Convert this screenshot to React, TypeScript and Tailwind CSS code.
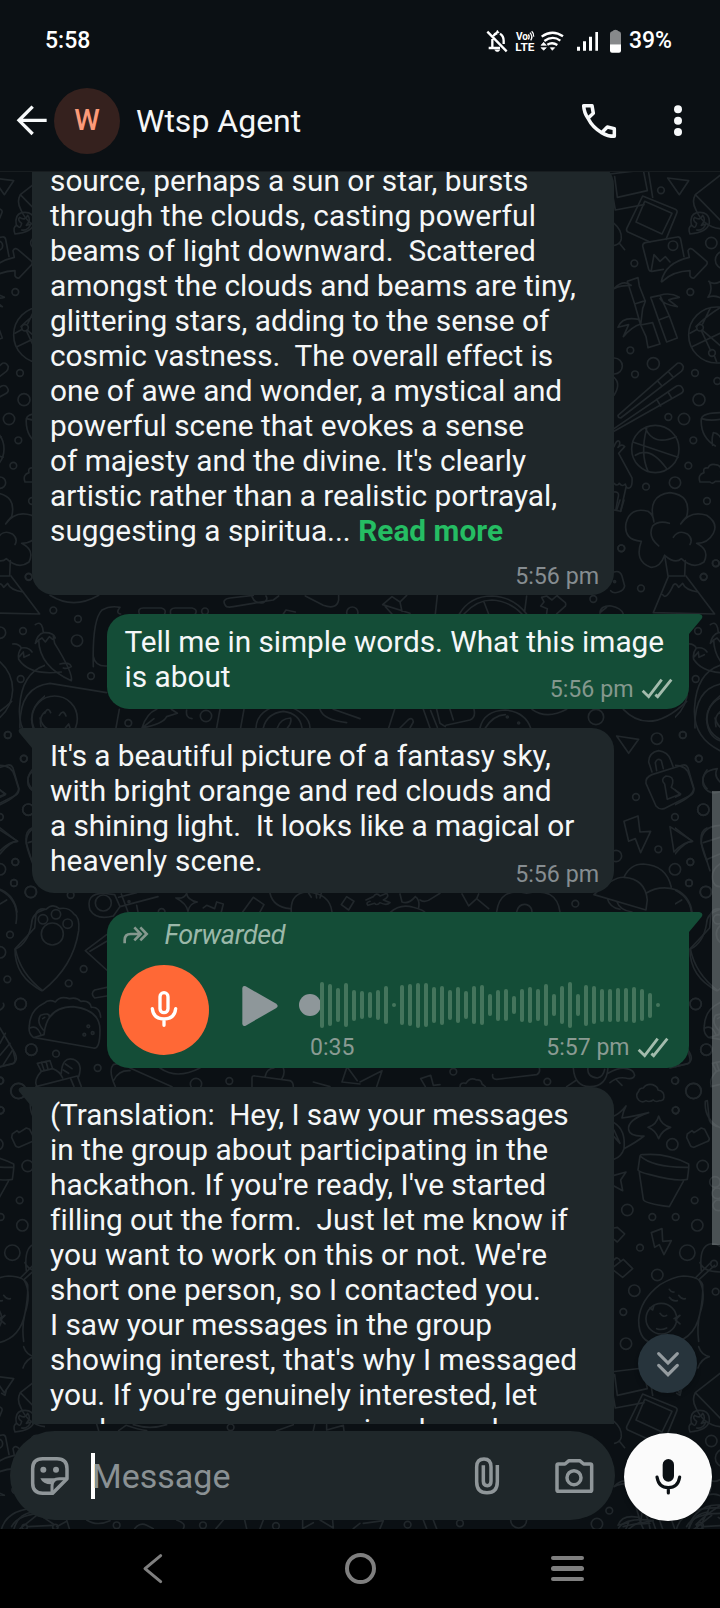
import type { ReactNode } from "react";

/* Line-art wallpaper: one tile is 675 x 1198 px, its motifs drawn on a 3x grid. */
function Tile() {
  return (
    <>
      <g transform="translate(600 160) scale(0.3333)">
        <path d="M30 42L130 30L142 92L52 112L44 50M46 150L132 134M146 38L158 112M30 60L46 150" />
        <path d="M128 108L226 148Q234 152 230 160L198 238M128 108L80 206Q78 212 84 216L150 246" />
        <path d="M134 124L216 160L186 222L108 186Z" />
        <path d="M203 54L266 62L238 104Z" />
        <path d="M128 258Q128 250 136 248L232 231Q240 230 242 238L252 290M128 258L146 328Q148 335 156 334L190 328M154 330L162 284L180 304L196 290L210 306" />
        <circle cx="219" cy="257" r="14" />
        <path d="M184 364Q196 308 268 292L264 272Q270 262 278 268L320 304Q324 310 318 316L282 354Q274 356 270 348V332Q220 334 190 362Q184 368 184 364Z" />
        <path d="M42 190Q66 210 64 236Q62 252 44 256M60 252L74 269" />
        <path d="M360 46L286 104Q274 126 288 150Q310 200 360 206M288 106L360 180" />
        <path d="M274 196Q268 164 290 158Q330 152 328 190Q320 218 270 222Q262 200 276 196Q286 210 290 190Q276 180 284 172Q300 184 308 166Q320 180 304 196L318 192Q308 214 290 210" />
        <path d="M82 364L114 353L118 378L136 424L128 446L122 495L158 488L180 552L144 563L138 530L122 495M82 364L104 432L136 422M104 432L122 495M42 386Q70 358 94 376Q60 376 42 386M54 502Q66 468 116 478L122 492Q96 500 70 530L86 494Z" />
        <path d="M152 412L180 406L208 468L176 480ZM176 480L200 546L232 534L208 468M180 406Q210 396 238 412Q214 416 206 420L232 440Q190 434 180 416" />
        <path d="M326 364Q342 376 362 364M328 364Q340 390 324 412Q342 404 362 414" />
        <circle cx="350" cy="525" r="84" />
        <path d="M362 442Q316 470 288 500M306 510L362 558M270 520L292 508M276 560L360 520M308 492L330 446M344 590L350 606M304 512L332 572" />
        <circle cx="300" cy="503" r="10" />
        <circle cx="336" cy="579" r="10" />
        <path d="M54 766L232 610Q244 606 250 620Q250 628 244 634L62 774Q54 774 54 766ZM172 662L184 676M204 634L218 650M42 806L230 678Q244 672 250 690Q250 698 240 702L42 814M170 718L182 738M204 696L216 716" />
        <circle cx="166" cy="867" r="71" />
        <path d="M98 846L234 892M140 806Q120 880 144 934M106 886Q150 856 200 926M136 804Q160 860 228 830" />
        <path d="M362 758Q310 758 304 776Q300 830 346 858M304 776Q330 784 362 778M338 856Q334 838 340 818Q360 820 366 844" />
        <path d="M300 966Q292 944 312 938Q308 922 324 924Q330 910 346 914Q366 916 362 936M300 966H330Q338 974 346 964H362" />
        <path d="M42 860Q50 838 58 844Q62 854 54 862Q66 850 74 860L56 880L96 954Q98 980 88 984Q78 986 76 972Q66 982 58 970Q52 980 42 970M78 982L62 1054L42 1050M42 996Q60 994 54 1014L48 1048M42 652Q64 672 42 706" />
        <path d="M162 1086Q140 1006 210 998Q276 1006 260 1070Q250 1080 242 1092Q270 1050 320 1066Q356 1090 340 1120Q324 1150 290 1150Q330 1170 312 1206Q280 1230 244 1196Q226 1214 194 1186Q180 1224 152 1222Q102 1204 124 1144Q70 1140 78 1090Q90 1040 144 1054Q160 1064 162 1086ZM176 1158Q142 1130 158 1098Q176 1080 208 1090M220 1132Q236 1108 262 1122Q280 1136 270 1154" />
        <path d="M194 1186L204 1248H254L256 1202" />
        <circle cx="183" cy="91" r="10" /><circle cx="103" cy="310" r="10" /><circle cx="271" cy="396" r="10" />
        <circle cx="334" cy="249" r="17" /><circle cx="91" cy="571" r="10" /><circle cx="160" cy="611" r="18" />
        <circle cx="105" cy="643" r="10" /><circle cx="285" cy="639" r="10" /><circle cx="43" cy="618" r="24" />
        <circle cx="297" cy="719" r="18" /><circle cx="205" cy="771" r="10" /><circle cx="252" cy="777" r="17" />
        <circle cx="280" cy="841" r="10" /><circle cx="265" cy="917" r="10" /><circle cx="225" cy="968" r="17" />
        <circle cx="138" cy="980" r="10" /><circle cx="321" cy="1023" r="10" /><circle cx="64" cy="1165" r="10" />
        <circle cx="352" cy="663" r="10" /><circle cx="347" cy="1210" r="10" /><circle cx="311" cy="1250" r="10" />
        <circle cx="372" cy="300" r="26" />
      </g>
      <g transform="translate(360 500) scale(0.3333)">
        <path d="M925 230L880 338L1064 342L978 228M908 284Q918 300 936 264Q944 240 956 262L968 250Q976 270 1014 276M762 216Q780 210 786 228L794 258Q792 272 776 276Q760 282 752 272" />
        <circle cx="764" cy="245" r="3" />
        <path d="M720 340Q720 316 754 318Q784 324 790 342M722 336L740 322" />
        <path d="M298 342Q330 288 396 288Q460 290 500 342M312 342Q350 300 396 300Q450 304 486 342M372 306L386 342M500 288L494 334M545 292L560 288L576 300L592 286M545 292L552 306L542 318L562 326L560 340M592 288L616 308Q620 318 612 322L590 342M68 314L150 340M68 314L96 290L120 306L140 286M76 320L96 342M120 306L126 334M232 286L226 342" />
        <path d="M104 628L86 684M190 628L210 684M212 632L232 682M230 628L240 670L256 680M258 676L330 660Q348 652 342 628M280 660L270 628M120 684L144 660Q158 650 160 666L150 684M360 684Q372 632 436 630Q496 636 512 684M376 684Q400 646 436 644" />
        <circle cx="442" cy="651" r="3" /><circle cx="476" cy="669" r="3" />
        <path d="M516 628Q560 660 620 628M790 628Q870 710 980 604" />
        <circle cx="708" cy="651" r="23" />
        <path d="M770 708L836 718L806 760Z" />
        <path d="M876 816L866 786Q866 758 896 752Q924 756 932 780L940 802M890 812L886 788Q892 772 904 782L910 806" />
        <path d="M876 824L966 796Q978 792 984 804L1002 866Q1002 880 992 886L912 926Q898 930 888 918L858 850Q856 832 876 824Z" />
        <path d="M914 852Q900 838 918 828Q942 828 938 850L934 862L962 882L922 898Z" />
        <path d="M792 964L834 948L840 996L872 994L842 1058L826 1016L806 1024Z" />
        <path d="M930 980L998 1024Q972 1024 942 1056Z" />
        <path d="M1080 976Q1022 980 1024 1030L1050 1112M1030 1028L1080 1012M1042 1078L1080 1062M1080 1092Q1052 1110 1058 1140Q1062 1160 1080 1160" />
        <path d="M1080 496Q1010 520 1004 620Q996 710 1080 752M1080 588Q1038 620 1040 660Q1044 710 1080 722M1080 636Q1062 650 1068 680" />
        <path d="M1072 806Q1020 812 1030 856Q1044 886 1080 876M1072 806Q1060 826 1080 846" />
        <path d="M702 1184Q760 1130 792 1132Q856 1136 862 1200L858 1230L702 1184M792 1132Q810 1092 850 1092Q920 1096 934 1162M858 1180Q900 1154 950 1170Q990 1190 996 1236M742 1196Q750 1224 780 1228M770 1204Q780 1232 816 1236" />
        <path d="M18 1200L40 1190Q50 1176 60 1188L80 1180Q90 1190 70 1200L90 1208Q80 1218 60 1208Q50 1218 44 1210L24 1216Q16 1208 30 1204M90 1238Q120 1210 160 1222Q190 1230 196 1238M120 1182L126 1206Q146 1214 166 1190M166 1190Q180 1200 176 1222M180 1200Q196 1210 214 1196L240 1180M306 1182L326 1218L350 1196L386 1226M356 1182L350 1196M410 1236Q420 1160 500 1180Q590 1160 600 1236M470 1236Q476 1210 500 1214Q516 1220 516 1236" />
        <circle cx="891" cy="716" r="17" /><circle cx="968" cy="705" r="10" /><circle cx="1016" cy="776" r="10" />
        <circle cx="828" cy="891" r="10" /><circle cx="1030" cy="929" r="17" /><circle cx="945" cy="951" r="10" />
        <circle cx="895" cy="1048" r="10" /><circle cx="945" cy="1108" r="17" /><circle cx="991" cy="1086" r="10" />
        <circle cx="987" cy="1149" r="10" /><circle cx="1037" cy="1176" r="17" /><circle cx="768" cy="1068" r="17" />
        <circle cx="843" cy="265" r="10" /><circle cx="700" cy="297" r="10" /><circle cx="1031" cy="231" r="10" />
        <circle cx="1068" cy="190" r="10" /><circle cx="784" cy="145" r="10" /><circle cx="646" cy="1211" r="10" />
        <path d="M770 30L780 0M782 34L792 0" />
      </g>
      <g transform="translate(0 500) scale(0.3333)">
        <path d="M106 374Q122 362 128 384L130 398M130 398Q112 404 106 430L116 420Q118 500 214 542Q220 520 164 430L160 410L166 414Q160 396 130 398ZM116 420L126 414L136 426L148 410L158 418M180 492Q210 484 214 500Q200 508 190 504" />
        <path d="M38 432Q56 430 64 444Q52 460 56 478Q88 528 184 516M64 444Q86 440 96 456M58 470L70 456L72 472L88 464" />
        <path d="M0 486Q38 520 38 570Q36 620 0 652M60 684Q56 560 150 550L320 578M280 500Q276 360 306 330Q330 316 360 322Q346 340 362 342M280 470Q286 500 320 498" />
        <circle cx="164" cy="656" r="68" />
        <path d="M134 640Q144 618 152 638M178 646Q190 626 198 648M120 654Q130 692 166 692M196 684L206 672L210 684" />
        <path d="M150 286Q220 330 296 286M676 316Q664 298 690 294L760 286M676 316Q680 324 700 320L820 300L836 288M756 290Q764 312 790 308Q806 300 798 288M916 288L970 316Q1010 330 1016 300V286M418 342Q412 324 430 324H484Q500 328 494 342M512 342Q508 324 526 324H576Q594 328 586 342M850 342L858 330L886 336" />
        <path d="M358 628L348 684M426 684Q440 640 470 628M426 684L462 656M426 684Q490 672 500 650L532 640Q520 632 514 628M560 630Q556 654 576 656M660 628L650 684M732 628L722 684M768 684Q770 628 850 612Q930 640 930 684M790 684Q800 640 850 634Q900 640 906 684M832 684Q840 656 872 654Q876 670 862 684M960 628Q970 660 1040 668M1000 628L1080 656" />
        <circle cx="618" cy="648" r="17" />
        <path d="M0 796Q36 796 44 828L56 866Q54 890 0 914M0 870L16 884L0 892M0 984L52 1024Q30 1024 0 1062M96 810Q72 840 96 866M96 984Q60 1000 96 1084M0 1170Q60 1200 48 1270" />
        <circle cx="310" cy="1209" r="24" />
        <path d="M270 1230Q256 1180 310 1180L344 1184L360 1220L340 1248Q290 1262 270 1230M356 1192L410 1178M360 1220L474 1190M410 1216L414 1236M364 1182L384 1236M528 1194Q552 1198 560 1180Q562 1200 592 1206Q568 1210 564 1234Q560 1210 528 1194M610 1224L620 1216L644 1226L650 1206L670 1212L664 1236M728 1236L760 1192L792 1214L780 1236M810 1180Q820 1222 870 1226M874 1236Q870 1180 920 1176Q990 1180 996 1236M926 1180L934 1192M948 1178L950 1194M964 1180L960 1194M1024 1214L1040 1190L1062 1204L1046 1230Z" />
        <circle cx="387" cy="1205" r="3" />
        <circle cx="160" cy="331" r="10" /><circle cx="234" cy="357" r="10" /><circle cx="69" cy="393" r="10" />
        <circle cx="231" cy="422" r="17" /><circle cx="62" cy="537" r="10" /><circle cx="273" cy="528" r="10" />
        <circle cx="385" cy="669" r="10" /><circle cx="24" cy="705" r="10" /><circle cx="72" cy="776" r="10" />
        <circle cx="85" cy="929" r="17" /><circle cx="46" cy="1086" r="10" /><circle cx="42" cy="1149" r="10" />
        <circle cx="93" cy="1176" r="17" /><circle cx="212" cy="1185" r="10" /><circle cx="485" cy="1236" r="10" />
        <circle cx="615" cy="334" r="10" /><circle cx="1057" cy="338" r="17" /><circle cx="0" cy="398" r="17" />
      </g>
      <g transform="translate(0 900) scale(0.3333)">
        <path d="M104 84L108 40Q118 22 138 28Q158 8 178 26Q206 20 222 42Q240 50 236 92Q220 200 128 272Q60 220 46 146Z" />
        <circle cx="157" cy="102" r="33" /><circle cx="129" cy="58" r="14" /><circle cx="168" cy="43" r="14" /><circle cx="203" cy="71" r="14" />
        <path d="M320 104L256 152L320 210M320 124L270 154M320 262L284 270Q270 280 284 294L320 288" />
        <path d="M132 404Q140 320 220 320Q300 330 300 390Q300 450 280 444L100 412Q84 400 88 378Q90 330 132 310Q146 296 166 306Q180 286 208 296Q230 290 242 304Q270 300 274 322Q300 320 302 352M132 404L104 412M122 346Q150 336 148 352M122 346Q108 364 130 390M128 356L134 352M90 384Q110 374 122 402" />
        <circle cx="265" cy="379" r="4" /><circle cx="253" cy="404" r="4" /><circle cx="278" cy="399" r="4" />
        <path d="M0 500L40 490Q54 480 46 462L0 384M0 430L16 400M0 466L30 430M10 494L38 450M0 330Q16 320 10 310M0 12L20 0" />
        <path d="M112 490L150 482L158 506L124 514ZM124 486L132 510M138 484L144 508M124 514Q100 540 110 560M158 506Q180 514 188 534M184 520Q186 470 220 478Q250 490 236 530M190 510L206 520M196 492L216 506M108 560L232 528L244 560M212 536L222 560" />
        <path d="M346 560Q324 510 340 494Q370 484 390 504L516 560M342 540Q356 510 390 512M480 504Q530 540 600 504M756 560V534Q756 526 766 528L870 542Q880 546 880 560M796 528Q800 506 822 504M850 504Q856 520 846 536M940 546L990 560M1040 504L1026 546L1080 552M1044 504L1072 542" />
        <circle cx="56" cy="573" r="23" /><circle cx="588" cy="552" r="17" /><circle cx="688" cy="543" r="10" />
        <circle cx="30" cy="104" r="10" /><circle cx="251" cy="207" r="10" /><circle cx="22" cy="238" r="10" /><circle cx="206" cy="250" r="10" />
        <circle cx="62" cy="312" r="17" /><circle cx="94" cy="449" r="17" /><circle cx="168" cy="461" r="10" /><circle cx="293" cy="504" r="10" />
        <circle cx="0" cy="157" r="17" /><circle cx="0" cy="542" r="11" /><circle cx="0" cy="631" r="11" />
      </g>
      <g transform="translate(360 900) scale(0.3333)">
        <path d="M0 546L66 512L50 560M182 536L212 526L220 556L240 554M182 536L196 560M300 560Q300 546 318 550Q330 530 350 540Q364 538 366 552L376 560M398 524Q396 538 410 538L530 524Q542 518 538 504M640 504Q644 560 690 560Q740 560 744 504M620 560L650 540M684 504Q680 530 712 534Q730 530 734 508M744 520Q780 500 800 506Q822 510 824 526Q820 540 796 534Q770 530 750 548M770 540L786 556" />
        <path d="M836 600Q824 586 836 574Q838 564 850 564Q860 550 878 554Q894 560 894 570Q914 574 912 592Q910 604 898 602Q888 608 880 600Q868 608 858 602Q846 610 836 600ZM930 504L982 492Q992 488 990 476L984 450" />
        <circle cx="280" cy="515" r="10" /><circle cx="562" cy="545" r="10" /><circle cx="945" cy="542" r="10" />
        <circle cx="1000" cy="573" r="23" /><circle cx="947" cy="631" r="10" /><circle cx="1007" cy="312" r="17" /><circle cx="1039" cy="449" r="17" />
        <path d="M1080 28Q1040 40 1040 70Q1030 130 990 148Q990 230 1070 272" />
      </g>
      <g transform="translate(600 1080) scale(0.3333)">
        <path d="M42 108Q60 100 78 78Q70 92 66 114Q100 110 146 98Q80 120 86 150Q90 170 132 168Q110 186 72 206M42 128Q78 150 72 206Q64 230 42 238M42 150L60 190L42 170" />
        <path d="M176 108Q184 136 212 142Q186 150 176 176Q166 150 144 142Q170 134 176 108Z" />
        <path d="M262 162L276 152L282 158L304 144L314 148L328 176Q328 184 318 186L282 202Q272 202 270 194L260 172Z" />
        <path d="M120 228Q122 222 130 224Q200 218 266 252Q268 258 262 298Q230 306 150 284Q116 276 114 270ZM120 228Q160 264 264 262M118 278L130 358Q132 370 208 380L250 304" />
        <path d="M42 286L78 276L62 300L68 332L42 318M42 444L52 442L74 462L52 486L42 478" />
        <path d="M154 458L186 446L188 484L214 482L192 524L178 494L164 502Z" />
        <path d="M42 560L70 538L98 566L68 592L42 572M42 540Q52 526 62 544" />
        <path d="M180 614Q120 660 116 720Q116 790 170 790Q280 800 300 700Q310 650 308 614Q300 590 250 588Q220 590 180 614ZM298 602Q320 640 300 700Q290 740 296 784" />
        <circle cx="184" cy="716" r="46" />
        <path d="M208 628Q214 638 222 636M208 652Q218 666 232 662M236 646Q246 660 256 656M170 746Q184 752 200 744M180 700Q190 714 200 706M222 716L240 706L226 720L240 732M150 684L158 690L162 676" />
        <path d="M286 594L334 546M296 600L344 556M304 572Q296 500 330 492Q350 490 362 500M300 548Q310 576 362 576" />
        <circle cx="342" cy="551" r="10" />
        <path d="M296 800Q304 824 328 830Q302 838 294 864M230 940L240 946L244 930" />
        <path d="M322 62L328 120Q334 138 362 142M322 62L316 64Q312 120 362 144" />
        <circle cx="227" cy="91" r="10" /><circle cx="217" cy="193" r="17" /><circle cx="308" cy="258" r="17" />
        <circle cx="82" cy="390" r="17" /><circle cx="157" cy="411" r="10" /><circle cx="227" cy="411" r="10" />
        <circle cx="284" cy="361" r="10" /><circle cx="292" cy="436" r="17" /><circle cx="120" cy="503" r="10" />
        <circle cx="262" cy="518" r="23" /><circle cx="172" cy="585" r="17" /><circle cx="103" cy="632" r="17" />
        <circle cx="70" cy="696" r="10" /><circle cx="78" cy="791" r="17" /><circle cx="347" cy="635" r="10" /><circle cx="345" cy="306" r="16" /><circle cx="352" cy="340" r="16" /><circle cx="355" cy="376" r="16" />
      </g>
      <g transform="translate(0 1380) scale(0.3333)">
        <path d="M290 132L296 152M356 152L378 136Q420 150 440 152M400 134Q450 150 500 134M830 152L880 134M940 152L944 134M980 134V150L1030 136L1032 152" />
        <path d="M42 446Q56 400 100 396M60 446Q80 430 110 406M84 440L156 436M130 412L160 432M200 420L208 446M170 440L200 424M260 420Q290 440 330 422M404 446Q420 426 440 436L460 446M530 420Q560 430 550 446M648 446L670 420M734 420L740 446M780 446L790 420M908 420V446L940 428M960 420L1000 444L998 420M1060 446L1080 430" />
        <circle cx="74" cy="441" r="8" /><circle cx="166" cy="441" r="8" />
        <circle cx="350" cy="436" r="10" /><circle cx="609" cy="436" r="10" /><circle cx="828" cy="438" r="10" /><circle cx="692" cy="142" r="10" />
        <path d="M1090 430L1150 422L1140 446M1270 420L1280 446M1300 420L1310 446" />
        <circle cx="1223" cy="434" r="10" /><circle cx="1380" cy="430" r="10" /><circle cx="1556" cy="420" r="24" /><circle cx="1828" cy="392" r="10" /><circle cx="1791" cy="432" r="17" />
        <path d="M1856 444Q1880 410 1960 422M1870 440Q1900 430 1950 430M1930 390Q1944 410 1950 446M2030 446Q2050 380 2160 384M2060 440Q2080 400 2160 400" />
      </g>
    </>
  );
}

function Wallpaper() {
  return (
    <svg className="absolute inset-0" width="720" height="1357" viewBox="0 172 720 1357" fill="none" stroke="#21272b" strokeWidth="5" strokeLinecap="round" strokeLinejoin="round">
      <defs>
        <g id="tile"><Tile /></g>
      </defs>
      <use href="#tile" />
      <svg x="0" y="172" width="45" height="1357" viewBox="675 172 45 1357"><use href="#tile" /></svg>
      <svg x="675" y="172" width="45" height="1357" viewBox="0 172 45 1357"><use href="#tile" /></svg>
      <svg x="600" y="1366" width="120" height="163" viewBox="600 168 120 163"><use href="#tile" /></svg>
      <svg x="0" y="1366" width="45" height="130" viewBox="675 168 45 130"><use href="#tile" /></svg>
    </svg>
  );
}

/* Each row is its text, the tracking of the whole line in px, and an optional tail. */
type Row = [text: string, stretch: number, tail?: ReactNode];

function Lines({ rows }: { rows: Row[] }) {
  return (
    <div className="text-[29.8px] leading-[35px] whitespace-pre text-[#f5f7f8]">
      {rows.map(([text, stretch, tail]) => (
        <div key={text} className="h-[35px]" style={{ letterSpacing: stretch / text.length }}>{text}{tail}</div>
      ))}
    </div>
  );
}

function Ticks() {
  return (
    <svg width="32" height="22" viewBox="843 527 96 66" fill="none" stroke="#a3bcad" strokeWidth="8.5">
      <path d="M848 565L866 583L905 532M886 577L893 583L934 532" />
    </svg>
  );
}

function Bubble({ side, className, tail = true, children }: { side: "in" | "out"; className: string; tail?: boolean; children: ReactNode }) {
  const out = side === "out";
  return (
    <div className={`relative w-[582px] shrink-0 pl-[18px] ${out ? "ml-[106.5px] rounded-tl-[22px] bg-[#144d37]" : "ml-8 rounded-tr-[22px] bg-[#1f272a]"} ${className}`}>
      {tail && (
        <svg className={`absolute top-0 ${out ? "left-[581px]" : "right-[581px] -scale-x-100"}`} width="15" height="21" viewBox="0 0 15 21" fill={out ? "#144d37" : "#1f272a"}>
          <path d="M0 0H11.5Q16 1 13.5 5L1 20V21H0Z" />
        </svg>
      )}
      {children}
    </div>
  );
}

const LEVELS = [140, 126, 100, 130, 93, 84, 80, 88, 113, 12, 120, 124, 135, 130, 107, 117, 92, 107, 84, 112, 120, 67, 93, 94, 52, 99, 106, 96, 124, 64, 113, 140, 64, 123, 115, 99, 99, 103, 101, 107, 95, 75, 12];

function StatusBar() {
  return (
    <div className="flex h-[80px] items-center pl-[45px] pt-[3px] text-[23px] font-medium text-white">
      <span>5:58</span>
      <svg className="ml-auto" width="144" height="28" viewBox="372 82 432 84" fill="none" stroke="#fff" strokeWidth="7">
        <path d="M382 93L440 152M397 115V142H386H420M400 106Q404 99 412 97M420 99Q431 106 431 120V130" />
        <path d="M407 97L412 88L418 97ZM404 147H420Q418 153 412 153Q406 153 404 147Z" fill="#fff" strokeWidth="1" />
        <text x="468" y="119" fontSize="30" fontWeight="700" stroke="none" fill="#fff" textLength="36" lengthAdjust="spacingAndGlyphs">Vo</text>
        <text x="466" y="151" fontSize="33" fontWeight="700" stroke="none" fill="#fff" textLength="57" lengthAdjust="spacingAndGlyphs">LTE</text>
        <path d="M505 101Q510 108 505 116M510 96Q520 108 512 119M515 92Q522 98 521 108" strokeWidth="4" />
        <path d="M545 108Q577 85 609 107M553 121Q578 103 601 120M562 132Q577 123 592 133" />
        <path d="M571 141H584L577 149ZM543 134L551 125L559 134ZM543 141H559L551 149Z" fill="#fff" strokeWidth="2" />
        <path d="M651 138h9v12h-9zM669 122h9v28h-9zM687 108h9v42h-9zM706 94h8v56h-8z" fill="#fff" stroke="none" />
        <path d="M750 131V99Q750 93 757 92Q760 87 766 87Q773 87 776 92Q783 93 783 99V131Z" fill="#87898b" stroke="none" />
        <path d="M750 131H783V150Q783 156 777 156H756Q750 156 750 150Z" fill="#fff" stroke="none" />
      </svg>
      <span className="mr-[48px] ml-[1px]">39%</span>
    </div>
  );
}

function Header() {
  return (
    <div className="flex h-[92px] items-center border-b border-[#181d20] pb-[10px]">
      <svg className="ml-[15px]" width="33" height="33" viewBox="45 312 99 99" fill="none" stroke="#f7f9fa" strokeWidth="10">
        <path d="M140 361H56M98 320L57 361L98 402" />
      </svg>
      <div className="ml-[6px] flex size-[66px] items-center justify-center rounded-full bg-[#35211e] text-[29px] font-medium text-[#fc9a79]">W</div>
      <h1 className="ml-[16px] text-[32px] leading-[38px] text-[#f5f7f8]">Wtsp Agent</h1>
      <svg className="ml-auto" width="36" height="36" viewBox="665 307 108 108" fill="none" stroke="#f7f9fa" strokeWidth="10.5" strokeLinejoin="round">
        <path d="M673 315H698L702 338L686 353Q674 336 673 315ZM765 407V384L744 379L727 396Q745 407 765 407ZM686 353Q700 381 727 396" />
      </svg>
      <svg className="mr-[36px] ml-[55px]" width="12" height="33" viewBox="937 312 36 99" fill="#f7f9fa">
        <circle cx="955" cy="328" r="12" /><circle cx="955" cy="362" r="12" /><circle cx="955" cy="396" r="12" />
      </svg>
    </div>
  );
}

function VoiceNote() {
  return (
    <Bubble side="out" className="mt-[19px] h-[156px] rounded-b-[22px] text-[23px] leading-[27px] text-[#8a9b93]">
      <div className="flex h-[46px] items-center gap-[15px]">
        <svg className="ml-[-3px]" width="28" height="20" viewBox="366 70 84 60" fill="none" stroke="#85988e" strokeWidth="8">
          <path d="M374 125V115Q374 97 392 97H420M403 77L422 97L403 116M421 77L440 97L421 116" />
        </svg>
        <span className="text-[27px] tracking-[-0.4px] text-[#9bb8a9] italic">Forwarded</span>
      </div>
      <div className="-ml-[5.5px] flex">
        <div className="mt-[7px] flex size-[90px] items-center justify-center rounded-full bg-[#ff6836]">
          <svg width="30" height="40" viewBox="447 270 90 120" fill="none" stroke="#fff" strokeWidth="10" strokeLinecap="round">
            <rect x="480" y="278" width="24" height="60" rx="12" />
            <path d="M457 326Q460 357 492 357Q524 357 527 326M492 358V376" />
          </svg>
        </div>
        <svg className="mt-[27px] ml-[33px]" width="36" height="42" viewBox="726 255 108 126" fill="#8e979a">
          <path d="M727 264Q728 256 737 259L829 311Q837 318 829 324L737 377Q728 380 727 372Z" />
        </svg>
        <div className="ml-[21px]">
          <div className="mt-[23px] flex h-[48px] items-center">
            <div className="size-[22px] rounded-full bg-[#8e979a]" />
            <div className="-ml-px flex items-center gap-1">
              {LEVELS.map((v, i) => (
                <div key={i} className="w-1 rounded-full bg-[#44745c]" style={{ height: v / 3 }} />
              ))}
            </div>
          </div>
          <div className="mt-[5px] ml-[11px] flex items-center">
            <span>0:35</span>
            <span className="ml-[192px] mr-[7px]">5:57 pm</span>
            <Ticks />
          </div>
        </div>
      </div>
    </Bubble>
  );
}

function Composer() {
  return (
    <div className="flex h-[105px] pt-[7px] pl-[9.5px]">
      <div className="flex h-[89px] w-[605px] items-center rounded-[44.5px] bg-[#1f272a]">
        <svg className="ml-[20px]" width="40" height="40" viewBox="89 230 120 120" fill="none" stroke="#8f9699" strokeWidth="10.5" strokeLinejoin="round">
          <path d="M127 238H170Q200 238 200 268V298L157 342H127Q97 342 97 312V268Q97 238 127 238Z" />
          <path d="M155 341V320Q155 298 177 298H199" strokeWidth="9" />
          <g fill="#8f9699" stroke="none">
            <circle cx="129" cy="271" r="9" /><circle cx="167" cy="271" r="9" />
            <path d="M120 297H165Q152 306 152 315Q128 315 120 297Z" />
          </g>
        </svg>
        <div className="ml-[21.5px] h-[46px] w-1 shrink-0 bg-white" />
        <span className="-ml-[3px] text-[34px] leading-[40px] text-[#8a9194]">Message</span>
        <svg className="ml-auto" width="28" height="40" viewBox="339 467 84 120" fill="none" stroke="#8f9699" strokeWidth="10.5">
          <path d="M412 494V544Q412 577 381 577Q350 577 350 544V500Q350 476 372 476Q393 476 393 500V543Q393 556 382 556Q370 556 370 543V495" />
        </svg>
        <svg className="mr-[19.5px] ml-[52px]" width="42" height="40" viewBox="580 470 126 120" fill="none" stroke="#8f9699" strokeWidth="10.5" strokeLinejoin="round">
          <path d="M596 494H616L628 484H660L672 494H692Q696 494 696 498V572Q696 576 692 576H596Q592 576 592 572V498Q592 494 596 494Z" />
          <circle cx="643" cy="535" r="21" />
        </svg>
      </div>
      <div className="mt-[2px] ml-[9.5px] flex size-[88px] items-center justify-center rounded-full bg-[#fbfbfb] shadow-md">
        <svg width="30" height="40" viewBox="880 470 90 120" fill="none" stroke="#0b1014" strokeWidth="9.5" strokeLinecap="round">
          <rect x="909" y="476" width="34" height="68" rx="17" fill="#0b1014" stroke="none" />
          <path d="M892 530Q897 562 926 562Q955 562 960 530M926 562V578" />
        </svg>
      </div>
    </div>
  );
}

export default function App() {
  return (
    <div className="flex h-[1608px] w-[720px] flex-col overflow-hidden bg-[#0b1014] font-['Roboto',sans-serif]">
      <StatusBar />
      <Header />
      <div className="relative h-[1357px] shrink-0">
        <Wallpaper />
        <main className="relative flex h-[1252px] flex-col overflow-hidden">
          <Bubble side="in" tail={false} className="mt-[-9px] h-[432px] rounded-b-[22px]">
            <Lines
              rows={[
                ["source, perhaps a sun or star, bursts", 0],
                ["through the clouds, casting powerful", 4],
                ["beams of light downward.  Scattered", 1],
                ["amongst the clouds and beams are tiny,", 0],
                ["glittering stars, adding to the sense of", 0.5],
                ["cosmic vastness.  The overall effect is", -1],
                ["one of awe and wonder, a mystical and", 0],
                ["powerful scene that evokes a sense", 2],
                ["of majesty and the divine. It's clearly", -1],
                ["artistic rather than a realistic portrayal,", -2],
                ["suggesting a spiritua... ", 0.5, <b className="text-[#25bd63]">Read more</b>],
              ]}
            />
            <div className="mt-[15px] pr-[15px] text-right text-[23.2px] leading-[27px] text-[#868d91]">5:56 pm</div>
          </Bubble>
          <Bubble side="out" className="mt-[19px] h-[95px] rounded-b-[22px] pt-[10px]">
            <Lines rows={[["Tell me in simple words. What this image", -2], ["is about", 0]]} />
            <div className="-mt-[18.5px] flex items-center justify-end gap-[7px] pr-[16px] text-[23.2px] leading-[27px] text-[#84988e]">
              5:56 pm <Ticks />
            </div>
          </Bubble>
          <Bubble side="in" className="mt-[19px] h-[165px] rounded-b-[22px] pt-[10px]">
            <Lines
              rows={[
                ["It's a beautiful picture of a fantasy sky,", -3],
                ["with bright orange and red clouds and", 3],
                ["a shining light.  It looks like a magical or", -3],
                ["heavenly scene.", 2.5],
              ]}
            />
            <div className="-mt-[17px] pr-[15px] text-right text-[23.2px] leading-[27px] text-[#868d91]">5:56 pm</div>
          </Bubble>
          <VoiceNote />
          <Bubble side="in" className="mt-[19px] h-[400px] pt-[10px]">
            <Lines
              rows={[
                ["(Translation:  Hey, I saw your messages", -3],
                ["in the group about participating in the", 3],
                ["hackathon. If you're ready, I've started", 0.5],
                ["filling out the form.  Just let me know if", 1],
                ["you want to work on this or not. We're", 2],
                ["short one person, so I contacted you.", 2],
                ["I saw your messages in the group", -1],
                ["showing interest, that's why I messaged", 2],
                ["you. If you're genuinely interested, let", 1],
                ["me know, so we can go in a large base", 0],
              ]}
            />
          </Bubble>
        </main>
        <div className="relative">
          <Composer />
        </div>
        <div className="absolute top-[619px] right-0 h-[454px] w-2 bg-[#8a9293]/50" />
        <button className="absolute top-[1162px] left-[638px] flex size-[59px] items-center justify-center rounded-full bg-[#27343c] shadow-md">
          <svg width="24" height="28" viewBox="886 155 72 84" fill="none" stroke="#959ca0" strokeWidth="9.5" strokeLinecap="round">
            <path d="M894 166L922 194L950 166M894 201L922 229L950 201" />
          </svg>
        </button>
      </div>
      <nav className="flex h-[79px] items-center bg-black pl-[142px]">
        <svg width="22" height="32" viewBox="426 518 66 96" fill="none" stroke="#7f7f7f" strokeWidth="9" strokeLinecap="round" strokeLinejoin="round">
          <path d="M482 526L435 565L482 604" />
        </svg>
        <div className="ml-[180.5px] size-[31px] rounded-full border-[4px] border-[#7f7f7f]" />
        <div className="ml-[175px] flex w-[33px] flex-col gap-[6px]">
          <div className="h-[4.3px] rounded-full bg-[#7f7f7f]" />
          <div className="h-[4.3px] rounded-full bg-[#7f7f7f]" />
          <div className="h-[4.3px] rounded-full bg-[#7f7f7f]" />
        </div>
      </nav>
    </div>
  );
}
